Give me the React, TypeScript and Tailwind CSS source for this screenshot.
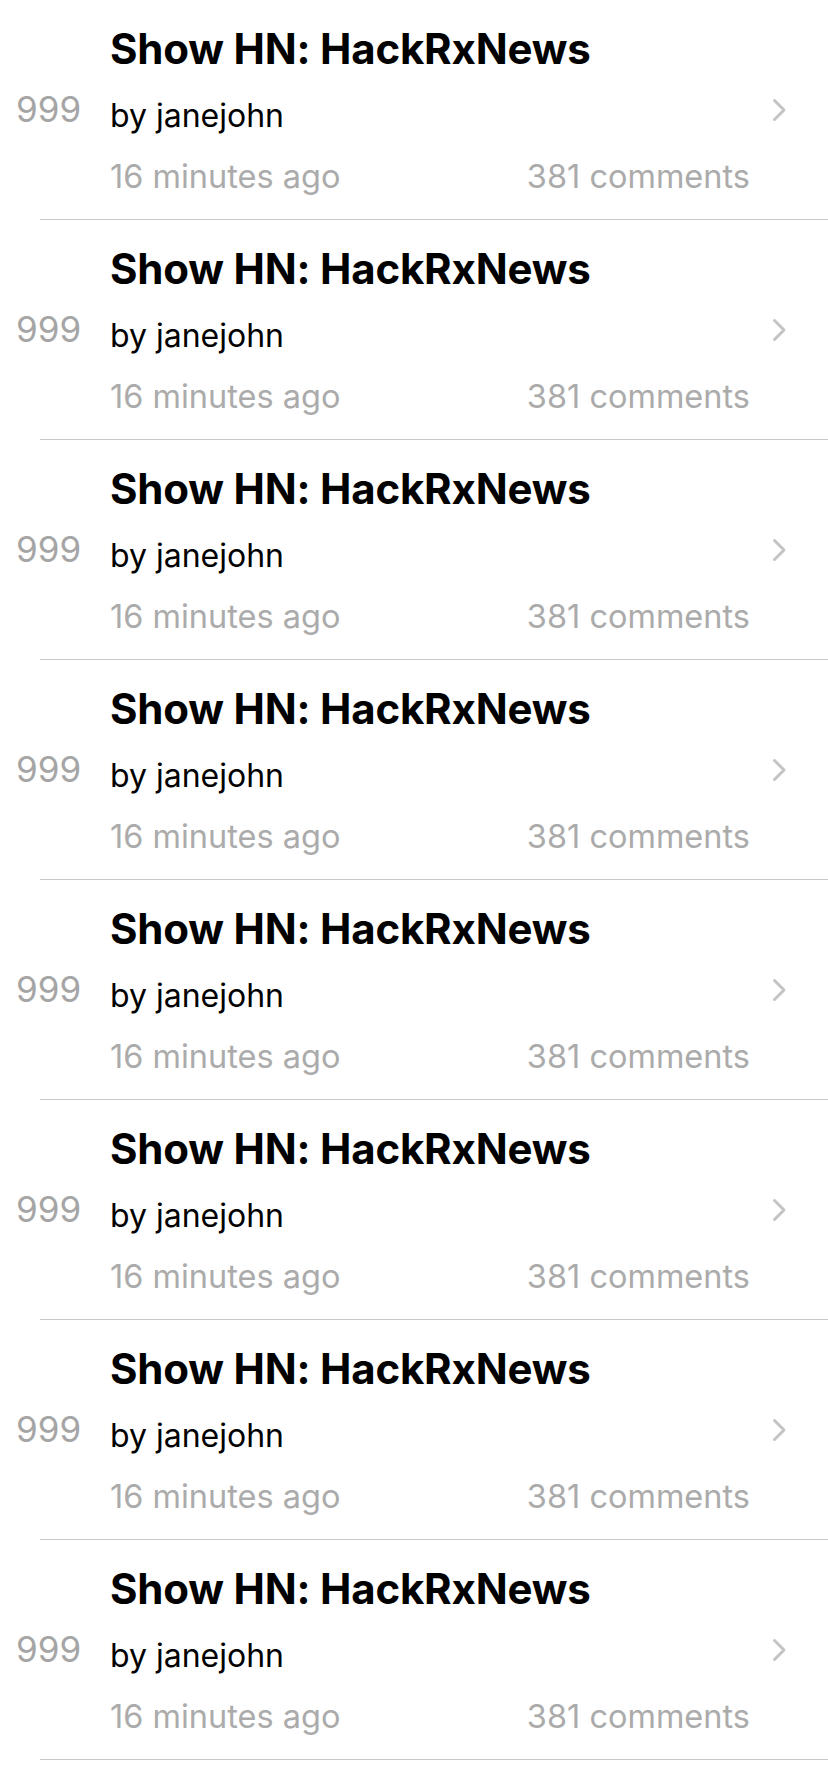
const stories = Array.from({ length: 8 }, (_, i) => ({
  id: i,
  points: 999,
  title: 'Show HN: HackRxNews',
  author: 'janejohn',
  age: '16 minutes ago',
  comments: 381,
}));

function Chevron() {
  return (
    <svg width="15" height="24" viewBox="0 0 15 24" fill="none">
      <path d="M2.5 2.5 L12 12 L2.5 21.5" stroke="#c4c4c7" strokeWidth="3" strokeLinecap="round" strokeLinejoin="round" />
    </svg>
  );
}

export default function App() {
  return (
    <div className="min-h-[1792px] bg-white font-['Inter',sans-serif] antialiased">
      {stories.map((s) => (
        <div key={s.id}>
          <div className="flex h-[219px] items-center">
            {/* points */}
            <div className="w-[110px] pl-[16px] text-[35px] leading-none text-[#a5a5a5]">{s.points}</div>

            {/* story */}
            <div className="flex flex-1 flex-col self-start pt-[24px]">
              <div className="text-[42px] font-bold leading-[50px] tracking-[-0.2px] text-black">{s.title}</div>
              <div className="mt-[23px] text-[32px] leading-[38px] text-black">by {s.author}</div>
              <div className="mt-[22px] flex justify-between text-[32.5px] leading-[40px] text-[#ababab]">
                <span>{s.age}</span>
                <span>{s.comments} comments</span>
              </div>
            </div>

            {/* disclosure */}
            <div className="ml-[22px] mr-[41px] w-[15px]">
              <Chevron />
            </div>
          </div>
          <div className="ml-[40px] h-px bg-[#c8c8ca]" />
        </div>
      ))}
    </div>
  );
}
